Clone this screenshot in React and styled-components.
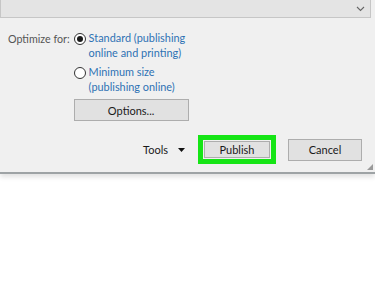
import styled, { createGlobalStyle } from "styled-components";

const GlobalStyle = createGlobalStyle`
  html, body {
    margin: 0;
    padding: 0;
    background: #ffffff;
  }
  body {
    font-family: Lato, "Open Sans", sans-serif;
  }
`;

const Page = styled.div`
  width: 375px;
  height: 300px;
  background: #ffffff;
  overflow: hidden;
`;

const Dialog = styled.div`
  height: 172px;
  background: #f0f0f0;
  border-bottom: 2px solid #9ea3a5;
  box-shadow: 0 3px 5px rgba(0, 0, 0, 0.12);
  display: flex;
  flex-direction: column;
  position: relative;
`;

const Dropdown = styled.div`
  height: 18px;
  width: 371px;
  box-sizing: border-box;
  background: #e4e4e4;
  border: 1px solid #c6c6c6;
  border-top: none;
  display: flex;
  justify-content: flex-end;
  align-items: center;
  padding-right: 5px;
  & svg {
    width: 9px;
    height: 6px;
  }
`;

const OptimizeGrid = styled.div`
  display: grid;
  grid-template-columns: auto auto;
  justify-content: start;
  column-gap: 4px;
  align-items: start;
  padding: 13px 0 0 8px;
`;

const Label = styled.div`
  font-size: 10.7px;
  color: #555555;
  line-height: 14px;
  padding-top: 1px;
`;

const Choices = styled.div`
  display: flex;
  flex-direction: column;
  gap: 5px;
`;

const Choice = styled.div`
  display: flex;
  align-items: flex-start;
  gap: 3px;
`;

const Radio = styled.span`
  width: 10px;
  height: 10px;
  margin-top: 2px;
  border-radius: 50%;
  border: 1px solid #333333;
  background: #ffffff;
  display: flex;
  align-items: center;
  justify-content: center;
  flex-shrink: 0;
  &::after {
    content: "";
    width: 6px;
    height: 6px;
    border-radius: 50%;
    background: ${(p) => (p.$checked ? "#1a1a1a" : "transparent")};
  }
`;

const ChoiceText = styled.div`
  font-size: 10.9px;
  line-height: 14.5px;
  color: #2e72b4;
`;

const Button = styled.button`
  font-family: Lato, "Open Sans", sans-serif;
  font-size: 11px;
  color: #1a1a1a;
  background: #e1e1e1;
  border: 1px solid #adadad;
  box-sizing: border-box;
  width: ${(p) => p.$width}px;
  height: ${(p) => p.$height}px;
  padding: 0;
  display: flex;
  align-items: center;
  justify-content: center;
`;

const Footer = styled.div`
  margin-top: auto;
  margin-bottom: 8px;
  display: flex;
  align-items: center;
  justify-content: flex-end;
  padding-right: 13px;
`;

const Tools = styled.div`
  font-size: 11px;
  color: #1a1a1a;
  display: flex;
  align-items: center;
  gap: 10px;
  margin-right: 13px;
  & svg {
    width: 7px;
    height: 4px;
  }
`;

const Highlight = styled.div`
  border: 5px solid #15e515;
  padding: 1px;
  margin-right: 12px;
  display: flex;
`;

const Grip = styled.div`
  position: absolute;
  right: 2px;
  bottom: 2px;
  width: 6px;
  height: 6px;
  background-image: radial-gradient(circle, #9a9a9a 0.8px, transparent 1px);
  background-size: 2px 2px;
  clip-path: polygon(100% 0, 100% 100%, 0 100%);
`;

export default function App() {
  return (
    <Page>
      <GlobalStyle />
      <Dialog>
        <Dropdown>
          <svg viewBox="0 0 9 6">
            <path d="M1 1 L4.5 4.5 L8 1" fill="none" stroke="#666" strokeWidth="1.1" />
          </svg>
        </Dropdown>
        <OptimizeGrid>
          <Label>Optimize for:</Label>
          <Choices>
            <Choice>
              <Radio $checked />
              <ChoiceText>
                Standard (publishing
                <br />
                online and printing)
              </ChoiceText>
            </Choice>
            <Choice>
              <Radio />
              <ChoiceText>
                Minimum size
                <br />
                (publishing online)
              </ChoiceText>
            </Choice>
            <Button $width={115} $height={22}>Options...</Button>
          </Choices>
        </OptimizeGrid>
        <Footer>
          <Tools>
            Tools
            <svg viewBox="0 0 7 4">
              <path d="M0 0 H7 L3.5 4 Z" fill="#111" />
            </svg>
          </Tools>
          <Highlight>
            <Button $width={66} $height={17}>Publish</Button>
          </Highlight>
          <Button $width={74} $height={22}>Cancel</Button>
        </Footer>
        <Grip />
      </Dialog>
    </Page>
  );
}
